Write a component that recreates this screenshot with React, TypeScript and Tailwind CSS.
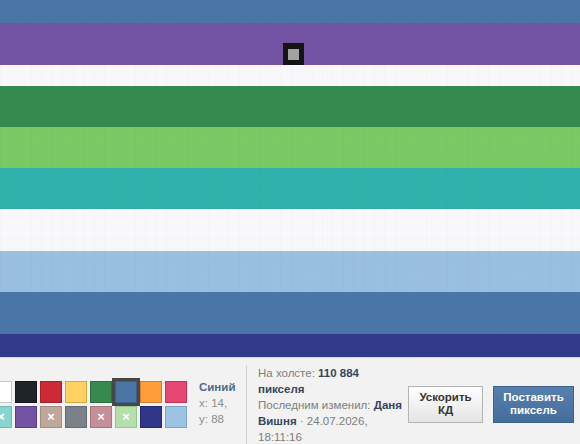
import React from "react";

const stripes = [
  { color: "bg-[#4a76a7]", h: "h-[23px]" },
  { color: "bg-[#7353a4]", h: "h-[42px]" },
  { color: "bg-[#f8f8fa]", h: "h-[21px]" },
  { color: "bg-[#358a4f]", h: "h-[41px]" },
  { color: "bg-[#79c965]", h: "h-[41px]" },
  { color: "bg-[#2fb2ab]", h: "h-[41px]" },
  { color: "bg-[#f8f8fa]", h: "h-[42px]" },
  { color: "bg-[#99bfe1]", h: "h-[41px]" },
  { color: "bg-[#4a76a7]", h: "h-[42px]" },
  { color: "bg-[#33398b]", h: "h-[23px]" },
];

type Swatch = { bg: string; locked?: boolean; active?: boolean };

const topRow: Swatch[] = [
  { bg: "bg-white border-[#c8c8c8]" },
  { bg: "bg-[#1f2429] border-[#15191d]" },
  { bg: "bg-[#cc2a36] border-[#a8202a]" },
  { bg: "bg-[#ffd163] border-[#d6a93d]" },
  { bg: "bg-[#358a4f] border-[#28703e]" },
  { bg: "bg-[#4a75a5] border-[#3a6090]", active: true },
  { bg: "bg-[#ff9d3b] border-[#d6802c]" },
  { bg: "bg-[#e74873] border-[#c2335b]" },
];

const bottomRow: Swatch[] = [
  { bg: "bg-[#85d6cf] border-[#66bab3]", locked: true },
  { bg: "bg-[#7353a4] border-[#5c3f8a]" },
  { bg: "bg-[#bea89c] border-[#a38c80]", locked: true },
  { bg: "bg-[#7a8189] border-[#626970]" },
  { bg: "bg-[#c48f98] border-[#a8757e]", locked: true },
  { bg: "bg-[#b6e0ab] border-[#97c58b]", locked: true },
  { bg: "bg-[#323689] border-[#24286d]" },
  { bg: "bg-[#9cc3e3] border-[#7aa3c6]" },
];

function ColorCell({ s }: { s: Swatch }) {
  return (
    <div
      className={`w-[22px] h-[22px] border flex items-center justify-center ${s.bg} ${
        s.active ? "ring-[3px] ring-[#474747]" : ""
      }`}
    >
      {s.locked && (
        <span className="text-white text-[13px] font-bold leading-none">×</span>
      )}
    </div>
  );
}

export default function App() {
  return (
    <div className="w-[580px] h-[444px] overflow-hidden bg-[#f2f2f2] font-['Liberation_Sans',Arial,sans-serif]">
      {/* canvas */}
      <div className="relative">
        {stripes.map((s, i) => (
          <div key={i} className={`${s.color} ${s.h}`} />
        ))}
        <div className="absolute inset-0 bg-[linear-gradient(to_right,rgba(0,0,0,0.015)_1px,transparent_1px),linear-gradient(to_bottom,rgba(0,0,0,0.01)_1px,transparent_1px)] bg-[size:10.4px_10.4px]" />
        {/* cursor */}
        <div className="absolute left-[283px] top-[43px] w-[21px] h-[22px] bg-[#141414] flex items-center justify-center">
          <div className="w-[11px] h-[11px] bg-[#a3a3a3]" />
        </div>
      </div>

      {/* bottom toolbar */}
      <div className="h-[87px] border-t border-[#d9dae0] flex items-center pt-[6px] pr-[6px]">
        <div className="ml-[-10px] flex flex-col gap-[3px]">
          <div className="flex gap-[3px]">
            {topRow.map((s, i) => (
              <ColorCell key={i} s={s} />
            ))}
          </div>
          <div className="flex gap-[3px]">
            {bottomRow.map((s, i) => (
              <ColorCell key={i} s={s} />
            ))}
          </div>
        </div>

        <div className="ml-[12px] w-[37px] text-[11.5px] leading-[15.7px] whitespace-nowrap">
          <div className="font-bold text-[#4e6a8a]">Синий</div>
          <div className="text-[#8c8c8c]">x: 14,</div>
          <div className="text-[#8c8c8c]">y: 88</div>
        </div>

        <div className="ml-[10px] w-px self-stretch mt-px bg-[#cfcfcf]" />

        <div className="pl-[11px] w-[161px] self-start mt-px text-[11.5px] leading-[16px] text-[#7d7d7d] whitespace-nowrap">
          <div>
            На холсте: <b className="text-[#34465c]">110 884</b>
          </div>
          <div>
            <b className="text-[#34465c]">пикселя</b>
          </div>
          <div>
            Последним изменил: <b className="text-[#34465c]">Даня</b>
          </div>
          <div>
            <b className="text-[#34465c]">Вишня</b> · 24.07.2026,
          </div>
          <div>18:11:16</div>
        </div>

        <div className="flex gap-[10px]">
          <button className="w-[75px] h-[37px] border border-[#b5b5b5] bg-gradient-to-b from-white to-[#e4e4e4] text-[#333] text-[11.5px] font-bold leading-[13px]">
            Ускорить
            <br />
            КД
          </button>
          <button className="w-[81px] h-[37px] border border-[#3d628e] bg-gradient-to-b from-[#567fad] to-[#466e9c] text-white text-[11.5px] font-bold leading-[13px]">
            Поставить
            <br />
            пиксель
          </button>
        </div>
      </div>
    </div>
  );
}
